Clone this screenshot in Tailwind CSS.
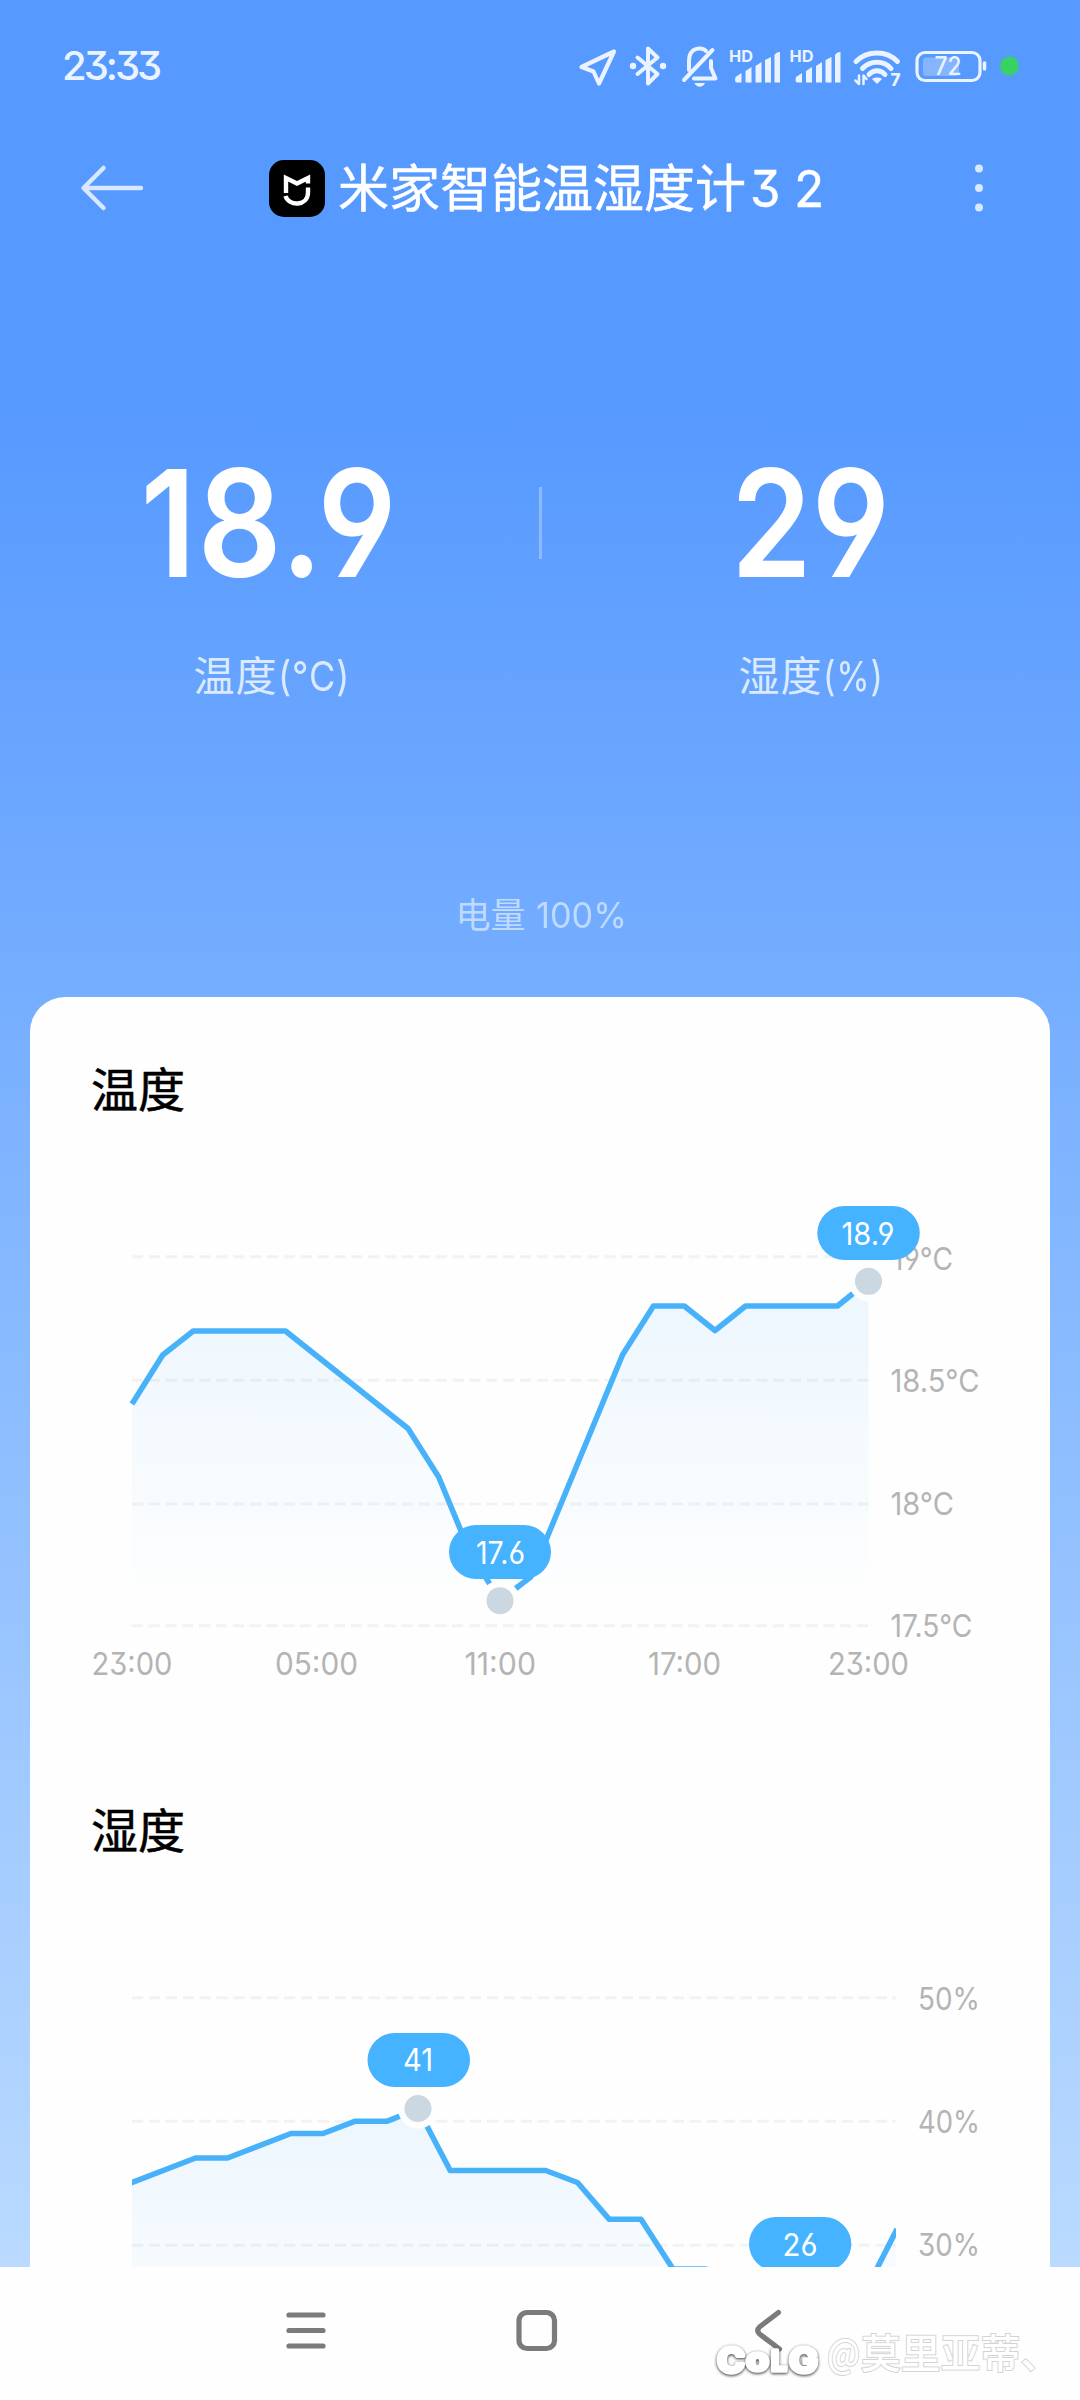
<!DOCTYPE html>
<html lang="zh-CN">
<head>
    <meta charset="UTF-8">
    <meta name="viewport" content="width=device-width, initial-scale=1.0">
    <title>米家智能温湿度计3 2</title>
    <script src="https://cdn.jsdelivr.net/npm/@tailwindcss/browser@4"></script>
    <style>
        /* Inter alternates: open 6 and 9, flat-top 3 */
        body {
            font-family: Inter, 'Noto Sans CJK SC', sans-serif;
            font-feature-settings: 'cv03', 'cv04', 'cv09';
        }
    </style>
</head>
<body class="w-[1080px] h-[2400px] overflow-hidden bg-[#fefefe] flex flex-col">
    <div class="h-[2267px] shrink-0 overflow-hidden flex flex-col bg-linear-to-b from-[#5699ff] from-[18%] to-[#badaff]">

        <!-- Status bar -->
        <div class="h-[120px] shrink-0 flex items-center justify-between pt-3 pl-[62px] pr-[60px] text-[#eaf3ff]">
            <span class="text-[40px] leading-none font-medium tracking-[-3px]">23:33</span>
            <svg class="w-[445px] h-[50px]" viewBox="575 41 445 50" fill="none" stroke="currentColor" stroke-linecap="round" stroke-linejoin="round">
                <!-- location -->
                <path d="M614 51.5 L581.5 67 L593.5 71.5 L599 83.500Z" stroke-width="4.200"/>
                <!-- bluetooth -->
                <path d="M637.500 57.500 L657.500 74 L648 83.500 V48.500 L657.500 57.500 L637.500 74" stroke-width="4"/>
                <circle cx="633" cy="66" r="3.200" fill="currentColor" stroke="none"/>
                <circle cx="663" cy="66" r="3.200" fill="currentColor" stroke="none"/>
                <!-- muted bell -->
                <path d="M689 70 V61 C689 46 703 47 706 51 M711 61 V68 L715.500 78.500 H694 M712.500 50 L684 80" stroke-width="4"/>
                <path d="M694.500 83 H705 C703 88 696.500 88 694.500 83Z" fill="currentColor" stroke="none"/>
                <!-- signal x2 -->
                <g id="signal" fill="currentColor" stroke="none">
                    <text x="729" y="62" font-size="16.500" font-weight="700" textLength="24" lengthAdjust="spacingAndGlyphs">HD</text>
                    <path d="M735.500 77 L741.500 73 V82.500 H737 Q735 82.500 735 80Z M745.500 71 L751.500 67 V82.500 H745.500Z M755.500 66 L761.500 62 V82.500 H755.500Z M765 60 L771 57 V82.500 H765Z M774.500 55 Q776 52 780 52 V82.500 H774.500Z"/>
                </g>
                <use href="#signal" x="60.500"/>
                <!-- wifi -->
                <path d="M856 61.500 C867 50 887 50 897.500 61.500" stroke-width="5"/>
                <path d="M862.500 68.500 C870 60 884 60 891 68.500" stroke-width="5"/>
                <path d="M869 74.500 C873 69.500 881 69.500 885 74.500" stroke-width="5"/>
                <path d="M872 79 C874 77 880 77 882 79 L877 84Z" fill="currentColor" stroke="none"/>
                <path d="M859 75.500 V84 L855.500 80.500 M863.500 84 V75.500 L866.500 79" stroke-width="2.500"/>
                <text x="890.500" y="85.500" font-size="17" font-weight="800" fill="currentColor" stroke="none">7</text>
                <!-- battery -->
                <rect x="917" y="52.500" width="63" height="28" rx="8" stroke-width="3.200"/>
                <rect x="923" y="57.500" width="36" height="18.500" rx="3" fill="#fff" fill-opacity=".28" stroke="none"/>
                <path d="M984.500 63 V69" stroke-width="3.500"/>
                <text x="934.500" y="75" font-size="25" font-weight="500" fill="currentColor" stroke="none" textLength="27" lengthAdjust="spacingAndGlyphs">72</text>
                <circle cx="1009.500" cy="66" r="9.500" fill="#38d264" stroke="none"/>
            </svg>
        </div>

        <!-- Title bar -->
        <div class="h-[136px] shrink-0 flex items-center pl-20 text-[#d8e8ff]">
            <svg class="w-[66px] h-[48px]" viewBox="0 0 66 48" fill="none" stroke="currentColor" stroke-width="4.500" stroke-linecap="round" stroke-linejoin="round">
                <path d="M61 24 H4 M23.500 4 L3.500 24 L23.500 44"/>
            </svg>
            <div class="ml-[123px] w-[560px] flex items-center gap-[13px]">
                <svg class="shrink-0 w-14 h-[57px]" viewBox="0 0 56 57" fill="none" stroke="#fff" stroke-width="4.400">
                    <rect width="56" height="57" rx="15" fill="#000" stroke="none"/>
                    <path d="M17 33 V18 L28 23.500 L39 18 V23.500"/>
                    <path d="M16.500 36 C19.500 46.500 39 46.500 39 32.500 V27.500"/>
                </svg>
                <h1 class="text-[51px] leading-none text-white whitespace-nowrap [-webkit-text-stroke:0.500px_#fff]">米家智能温湿度计<span class="inline-block origin-left scale-x-[.96] ml-[4px]">3 2</span></h1>
            </div>
            <svg class="ml-[146px] w-2 h-[48px]" viewBox="0 0 8 48" fill="currentColor">
                <circle cx="4" cy="4.500" r="4"/><circle cx="4" cy="24" r="4"/><circle cx="4" cy="43.500" r="4"/>
            </svg>
        </div>

        <!-- Current readings -->
        <div class="h-[640px] shrink-0 pt-[192px] flex">
            <div class="flex-1 flex flex-col items-center">
                <span class="h-[150px] leading-[150px] text-[149px] font-semibold text-white tracking-[2px] scale-x-[.88]">18.9</span>
                <span class="mt-[48px] text-[41px] leading-[60px] text-[#dceaff] tracking-[1px]">温度<span class="inline-block origin-left scale-x-[.88] w-[69px]">(°C)</span></span>
            </div>
            <div class="w-[3px] h-[72px] mt-[39px] -mx-[1.500px] bg-[#8dbaff]"></div>
            <div class="flex-1 flex flex-col items-center">
                <span class="h-[150px] leading-[150px] text-[149px] font-semibold text-white scale-x-[.87]">29</span>
                <span class="mt-[48px] text-[41px] leading-[60px] text-[#dceaff] tracking-[1px]">湿度<span class="inline-block origin-left scale-x-[.83] w-[59px]">(%)</span></span>
            </div>
        </div>
        <div class="h-[101px] shrink-0 pt-px flex justify-center gap-[10px] text-[35px] leading-[36px] text-[#bfdaff]">
            <span>电量</span>
            <span class="inline-block origin-left scale-x-[.98] w-[89px]">100%</span>
        </div>

        <!-- History card -->
        <div class="h-[1300px] shrink-0 mx-[30px] rounded-t-[35px] bg-[#fefefe] flex flex-col">
            <section class="h-[741px] shrink-0">
                <h2 class="pt-[68px] pl-[61px] text-[47px] leading-[50px] text-black [-webkit-text-stroke:0.500px_#000]">温度</h2>
                <svg class="w-[1020px] h-[540px]" viewBox="30 1115 1020 540" overflow="visible">
                    <defs>
                        <linearGradient id="fillTemp" gradientUnits="userSpaceOnUse" x1="0" y1="1281" x2="0" y2="1600">
                            <stop offset="0" stop-color="#45b0ff" stop-opacity=".1"/>
                            <stop offset="1" stop-color="#45b0ff" stop-opacity="0"/>
                        </linearGradient>
                    </defs>
                    <path d="M132 1256.700 H869 M132 1380.300 H869 M132 1504 H869 M131.500 1625.700 H869" stroke="#f2f2f2" stroke-width="3" stroke-dasharray="11.200 5.670"/>
                    <path fill="url(#fillTemp)" d="M132 1404 L162.700 1355 L193.300 1331 H285.500 L408 1428.500 L438.700 1477 L469.300 1551 L500 1600.500 L530.700 1577 L561.300 1503 L622.700 1354.500 L653.500 1306 H684.300 L715 1330.500 L745.600 1306 H837.500 L868.500 1281 V1626 H132Z"/>
                    <path fill="none" stroke="#47b2fa" stroke-width="5.600" stroke-linejoin="round" d="M132 1404 L162.700 1355 L193.300 1331 H285.500 L408 1428.500 L438.700 1477 L469.300 1551 L500 1600.500 L530.700 1577 L561.300 1503 L622.700 1354.500 L653.500 1306 H684.300 L715 1330.500 L745.600 1306 H837.500 L868.500 1281"/>
                    <g fill="#b4b4b4" font-size="31">
                        <text x="892" y="1269.500" textLength="61" lengthAdjust="spacingAndGlyphs">19°C</text>
                        <text x="890.500" y="1392" textLength="89" lengthAdjust="spacingAndGlyphs">18.5°C</text>
                        <text x="890.500" y="1514.700" textLength="63.500" lengthAdjust="spacingAndGlyphs">18°C</text>
                        <text x="890.500" y="1637" textLength="82" lengthAdjust="spacingAndGlyphs">17.5°C</text>
                        <text x="91.500" y="1674.500" textLength="81" lengthAdjust="spacingAndGlyphs">23:00</text>
                        <text x="275" y="1674.500" textLength="83" lengthAdjust="spacingAndGlyphs">05:00</text>
                        <text x="464.500" y="1674.500" textLength="71.500" lengthAdjust="spacingAndGlyphs">11:00</text>
                        <text x="648" y="1674.500" textLength="73" lengthAdjust="spacingAndGlyphs">17:00</text>
                        <text x="828" y="1674.500" textLength="81" lengthAdjust="spacingAndGlyphs">23:00</text>
                    </g>
                    <circle cx="500" cy="1600.700" r="16.800" fill="#cbd8e1" stroke="#fefefe" stroke-width="6.500"/>
                    <circle cx="868.500" cy="1281.300" r="16.800" fill="#cbd8e1" stroke="#fefefe" stroke-width="6.500"/>
                    <g fill="#45b3ff">
                        <rect x="449" y="1525" width="102" height="54" rx="27"/>
                        <rect x="817.300" y="1206" width="102.500" height="54" rx="27"/>
                    </g>
                    <g fill="#fff" font-size="31">
                        <text x="476" y="1563.500" textLength="49" lengthAdjust="spacingAndGlyphs">17.6</text>
                        <text x="841.500" y="1244.500" textLength="53" lengthAdjust="spacingAndGlyphs">18.9</text>
                    </g>
                </svg>
            </section>

            <section class="h-[560px] shrink-0">
                <h2 class="pt-[68px] pl-[61px] text-[47px] leading-[50px] text-black [-webkit-text-stroke:0.500px_#000]">湿度</h2>
                <svg class="w-[1020px] h-[440px]" viewBox="30 1856 1020 440">
                    <defs>
                        <linearGradient id="fillHum" gradientUnits="userSpaceOnUse" x1="0" y1="2109" x2="0" y2="2369">
                            <stop offset="0" stop-color="#45b0ff" stop-opacity=".1"/>
                            <stop offset="1" stop-color="#45b0ff" stop-opacity="0"/>
                        </linearGradient>
                        <clipPath id="plotHum"><rect x="132" y="1990" width="764" height="400"/></clipPath>
                    </defs>
                    <path d="M132 1997.700 H895.700 M132 2121.300 H895.700 M132 2245.300 H895.700" stroke="#f2f2f2" stroke-width="3" stroke-dasharray="11.200 5.700"/>
                    <g clip-path="url(#plotHum)">
                        <path fill="url(#fillHum)" d="M132 2182.500 L195.600 2158 H227.500 L291 2133.500 H323 L354.700 2121.300 H386.600 L418 2109 L450.200 2170.500 H545.700 L577.500 2182.500 L609.300 2219.300 H641 L673 2269 H705 L768.500 2282 L800 2294 H864 L895.700 2231.500 V2369 H132Z"/>
                        <path fill="none" stroke="#47b2fa" stroke-width="5.600" stroke-linejoin="round" d="M130 2183.300 L195.600 2158 H227.500 L291 2133.500 H323 L354.700 2121.300 H386.600 L418 2109 L450.200 2170.500 H545.700 L577.500 2182.500 L609.300 2219.300 H641 L673 2269 H705 L768.500 2282 L800 2294 H864 L897 2229"/>
                    </g>
                    <g fill="#b4b4b4" font-size="31">
                        <text x="918" y="2010" textLength="62" lengthAdjust="spacingAndGlyphs">50%</text>
                        <text x="918" y="2132.700" textLength="62" lengthAdjust="spacingAndGlyphs">40%</text>
                        <text x="918" y="2255.500" textLength="62" lengthAdjust="spacingAndGlyphs">30%</text>
                    </g>
                    <circle cx="418" cy="2108.500" r="16.800" fill="#cbd8e1" stroke="#fefefe" stroke-width="6.500"/>
                    <g fill="#45b3ff">
                        <rect x="367.500" y="2033" width="102.500" height="54" rx="27"/>
                        <rect x="749" y="2217" width="102.300" height="54" rx="27"/>
                    </g>
                    <g fill="#fff" font-size="31">
                        <text x="403" y="2071" textLength="30" lengthAdjust="spacingAndGlyphs">41</text>
                        <text x="782.500" y="2255.500" textLength="35" lengthAdjust="spacingAndGlyphs">26</text>
                    </g>
                </svg>
            </section>
        </div>
    </div>

    <!-- System navigation -->
    <div class="h-[133px] shrink-0 relative bg-[#fefefe]">
        <svg class="w-[1080px] h-[133px]" viewBox="0 2267 1080 133" fill="none" stroke="#7b7b7b" stroke-width="5.200" stroke-linecap="round" stroke-linejoin="round">
            <path d="M289 2315 H323 M289 2330.500 H323 M289 2346 H323"/>
            <rect x="519" y="2312.500" width="35.500" height="36" rx="8"/>
            <path d="M778.500 2312.500 L759.500 2327 Q756 2330.500 759.500 2334 L779.500 2349"/>
        </svg>
        <!-- Watermark -->
        <svg class="absolute inset-0 w-[1080px] h-[133px]" viewBox="0 2267 1080 133">
            <g class="drop-shadow-[0_1px_1.500px_rgba(0,0,0,0.800)]" fill="#fff" stroke="#fff" stroke-width="3.500" stroke-linejoin="round" font-weight="800">
                <text x="717" y="2373" font-size="35" textLength="28" lengthAdjust="spacingAndGlyphs">C</text>
                <text x="746" y="2371" font-size="32" textLength="23" lengthAdjust="spacingAndGlyphs">o</text>
                <text x="771" y="2371" font-size="29" textLength="16" lengthAdjust="spacingAndGlyphs">L</text>
                <text x="789" y="2373" font-size="35" textLength="29" lengthAdjust="spacingAndGlyphs">G</text>
            </g>
            <g fill="#fff" stroke="#d4d4d4" stroke-width="2" paint-order="stroke" font-size="39.500" font-weight="500" font-family="'Noto Sans CJK SC', sans-serif">
                <text x="827" y="2368" textLength="33" lengthAdjust="spacingAndGlyphs">@</text>
                <text x="861" y="2368" textLength="199">莫里亚蒂、</text>
            </g>
        </svg>
    </div>
</body>
</html>
